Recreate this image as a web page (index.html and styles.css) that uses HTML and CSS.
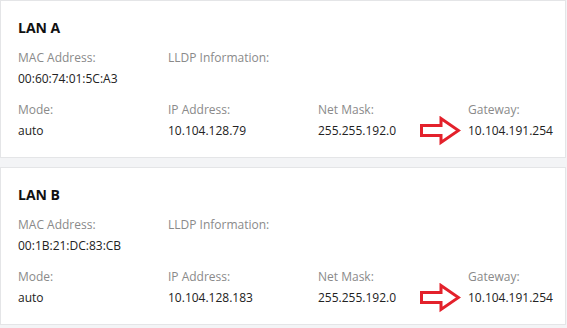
FILE: index.html
```html
<!DOCTYPE html>
<html lang="en">

<head>
    <meta charset="UTF-8">
    <meta name="viewport" content="width=device-width, initial-scale=1.0">
    <title>Network</title>
    <link rel="stylesheet" href="styles.css">
</head>

<body>
    <div class="card">
        <h2 class="card-title">LAN A</h2>
        <div class="info-row">
            <div class="info-cell">
                <div class="label">MAC Address:</div>
                <div class="value">00:60:74:01:5C:A3</div>
            </div>
            <div class="info-cell">
                <div class="label">LLDP Information:</div>
                <div class="value"></div>
            </div>
        </div>
        <div class="info-row">
            <div class="info-cell">
                <div class="label">Mode:</div>
                <div class="value">auto</div>
            </div>
            <div class="info-cell">
                <div class="label">IP Address:</div>
                <div class="value">10.104.128.79</div>
            </div>
            <div class="info-cell">
                <div class="label">Net Mask:</div>
                <div class="value">255.255.192.0</div>
            </div>
            <div class="info-cell gateway">
                <div class="label">Gateway:</div>
                <div class="value">10.104.191.254</div>
                <svg class="arrow" width="42" height="30" viewBox="0 0 42 30">
                    <polygon points="2.5,9.5 22,9.5 22,2.5 39.5,14.5 22,26.5 22,19.5 2.5,19.5" />
                </svg>
            </div>
        </div>
    </div>
    <div class="card">
        <h2 class="card-title">LAN B</h2>
        <div class="info-row">
            <div class="info-cell">
                <div class="label">MAC Address:</div>
                <div class="value">00:1B:21:DC:83:CB</div>
            </div>
            <div class="info-cell">
                <div class="label">LLDP Information:</div>
                <div class="value"></div>
            </div>
        </div>
        <div class="info-row">
            <div class="info-cell">
                <div class="label">Mode:</div>
                <div class="value">auto</div>
            </div>
            <div class="info-cell">
                <div class="label">IP Address:</div>
                <div class="value">10.104.128.183</div>
            </div>
            <div class="info-cell">
                <div class="label">Net Mask:</div>
                <div class="value">255.255.192.0</div>
            </div>
            <div class="info-cell gateway">
                <div class="label">Gateway:</div>
                <div class="value">10.104.191.254</div>
                <svg class="arrow" width="42" height="30" viewBox="0 0 42 30">
                    <polygon points="2.5,9.5 22,9.5 22,2.5 39.5,14.5 22,26.5 22,19.5 2.5,19.5" />
                </svg>
            </div>
        </div>
    </div>
</body>

</html>
```

FILE: styles.css
```css
body {
    margin: 0;
    background-color: #f3f4f6;
    font-family: "Open Sans", "Noto Sans", sans-serif;
    font-size: 12px;
    color: #222;
}
.card {
    background-color: #fff;
    border: 1px solid #e4e5e7;
    margin: 0 1px 9px 0;
    padding: 17px 17px 16px;
}
.card-title {
    margin: 0 0 9px;
    font-size: 14px;
    line-height: 20px;
    font-weight: 700;
    color: #111;
}
.info-row {
    display: grid;
    grid-template-columns: 150px 150px 150px 1fr;
}
.info-row + .info-row {
    margin-top: 10px;
}
.info-cell {
    position: relative;
}
.label {
    line-height: 21px;
    color: #8a8a8a;
}
.value {
    line-height: 21px;
    min-height: 21px;
    color: #222;
}
.arrow {
    position: absolute;
    left: -49px;
    top: 17px;
}
.arrow polygon {
    fill: none;
    stroke: #e3212b;
    stroke-width: 3;
}
```
